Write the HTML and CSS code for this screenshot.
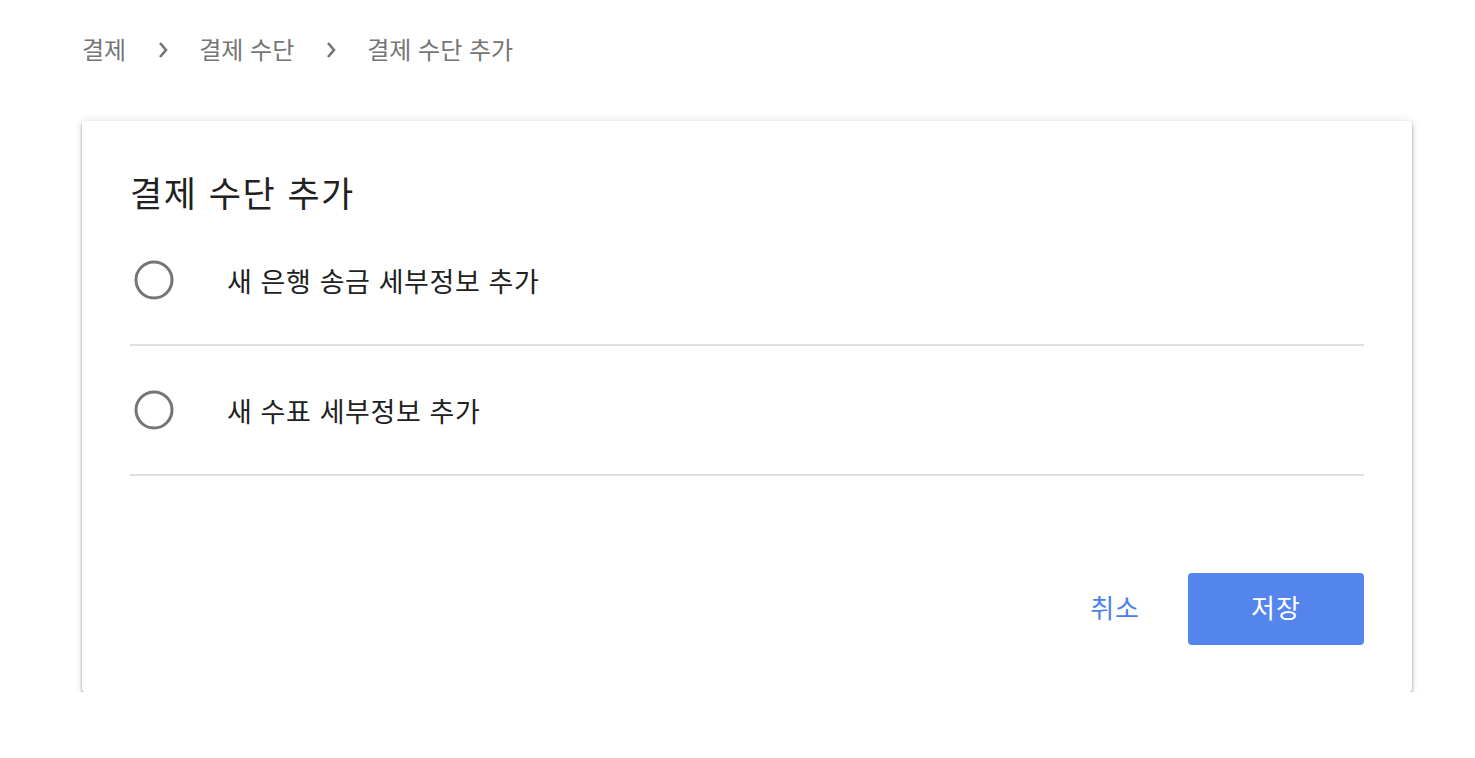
FILE: index.html
```html
<!DOCTYPE html>
<html lang="ko">
<head>
<meta charset="utf-8">
<title>결제 수단 추가</title>
<link rel="stylesheet" href="styles.css">
</head>
<body>
<nav class="crumbs">
  <span class="crumb">결제</span>
  <svg class="chev" width="10" height="18" viewBox="0 0 10 18"><path d="M2 2 L8 9 L2 16" fill="none" stroke="#757575" stroke-width="2.6"/></svg>
  <span class="crumb">결제 수단</span>
  <svg class="chev" width="10" height="18" viewBox="0 0 10 18"><path d="M2 2 L8 9 L2 16" fill="none" stroke="#757575" stroke-width="2.6"/></svg>
  <span class="crumb">결제 수단 추가</span>
</nav>
<main class="card">
  <h1 class="title">결제 수단 추가</h1>
  <div class="option">
    <svg class="radio" width="42" height="42" viewBox="0 0 42 42"><circle cx="21" cy="21" r="18" fill="none" stroke="#757575" stroke-width="3"/></svg>
    <span class="label">새 은행 송금 세부정보 추가</span>
  </div>
  <div class="option">
    <svg class="radio" width="42" height="42" viewBox="0 0 42 42"><circle cx="21" cy="21" r="18" fill="none" stroke="#757575" stroke-width="3"/></svg>
    <span class="label">새 수표 세부정보 추가</span>
  </div>
  <div class="actions">
    <button class="btn-text">취소</button>
    <button class="btn-primary">저장</button>
  </div>
</main>
</body>
</html>
```
FILE: styles.css
```css
* { box-sizing: border-box; }
body {
  margin: 0;
  background: #fff;
  font-family: "Noto Sans CJK KR", "Noto Sans", sans-serif;
  color: #212121;
}
.crumbs {
  display: flex;
  align-items: flex-start;
  padding: 31px 0 0 82px;
  height: 121px;
}
.crumb {
  font-size: 24px;
  line-height: 36px;
  color: #757575;
}
.chev {
  margin: 10px 31px 0 32px;
}
.card {
  margin-left: 82px;
  width: 1330px;
  height: 571px;
  background: #fff;
  border-radius: 3px;
  box-shadow: 0 2px 3px rgba(0,0,0,0.38), 0 0 10px rgba(0,0,0,0.12);
  padding: 47px 48px 0 48px;
  display: flex;
  flex-direction: column;
}
.title {
  margin: 0;
  font-size: 35px;
  letter-spacing: 1.5px;
  font-weight: 400;
  line-height: 48px;
  color: #212121;
}
.option {
  display: flex;
  align-items: center;
  height: 130px;
  border-bottom: 2px solid #e0e0e0;
  flex-shrink: 0;
}
.radio { margin-left: 3px; flex-shrink: 0; }
.label {
  margin-left: 52px;
  font-size: 27px;
  letter-spacing: 0.6px;
  color: #212121;
}
.actions {
  display: flex;
  justify-content: flex-end;
  align-items: center;
  margin-top: 97px;
  gap: 48px;
}
.btn-text {
  border: none;
  background: none;
  font-family: inherit;
  font-size: 26px;
  letter-spacing: 1px;
  color: #4a80ea;
  padding: 0 0 5px 0;
}
.btn-primary {
  border: none;
  border-radius: 4px;
  background: #5385ec;
  color: #fff;
  font-family: inherit;
  font-size: 26px;
  letter-spacing: 1px;
  width: 176px;
  height: 72px;
  padding: 0 0 5px 0;
}
```
